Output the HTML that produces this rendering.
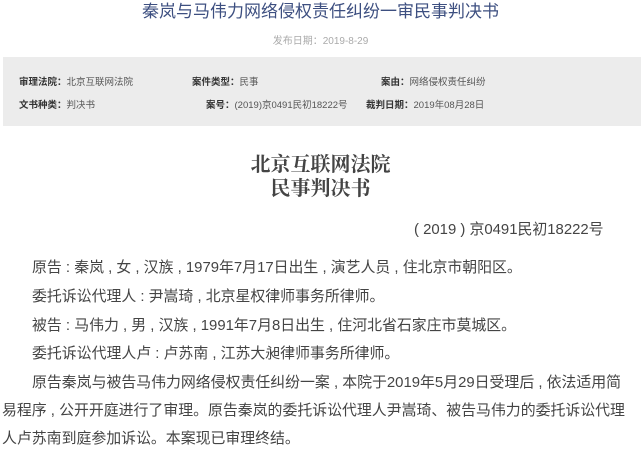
<!DOCTYPE html>
<html><head><meta charset="utf-8"><style>
body{margin:0;width:641px;height:454px;overflow:hidden;background:#fff;font-family:"Liberation Sans","Noto Sans CJK SC",sans-serif;}
.t{position:absolute;left:0;width:641px;text-align:center;}
.title{top:1px;font-size:17px;color:#3d4f80;line-height:22px;}
.date{top:32px;font-size:10px;color:#aaa;}
.box{position:absolute;left:3px;top:57px;width:638px;height:69px;background:#ececec;}
.f{position:absolute;font-size:9.5px;color:#555;white-space:nowrap;}
.f b{color:#333;}
.h{font-family:"Noto Serif CJK SC",serif;font-weight:bold;font-size:20px;color:#444;line-height:24px;}
.p{position:absolute;font-size:14.9px;color:#444;white-space:nowrap;line-height:20px;}
</style></head><body>
<div class="t title">秦岚与马伟力网络侵权责任纠纷一审民事判决书</div>
<div class="t date">发布日期：2019-8-29</div>
<div class="box"></div>
<div class="f" style="left:19px;top:74px"><b>审理法院：</b>北京互联网法院</div>
<div class="f" style="left:192px;top:74px"><b>案件类型：</b>民事</div>
<div class="f" style="left:381px;top:74px"><b>案由：</b>网络侵权责任纠纷</div>
<div class="f" style="left:19px;top:97px"><b>文书种类：</b>判决书</div>
<div class="f" style="left:206px;top:97px"><b>案号：</b>(2019)京0491民初18222号</div>
<div class="f" style="left:366px;top:97px"><b>裁判日期：</b>2019年08月28日</div>
<div class="t h" style="top:151px">北京互联网法院<br>民事判决书</div>
<div class="p" style="left:414px;top:220px">( 2019 ) 京0491民初18222号</div>
<div class="p" style="left:32px;top:258px">原告 : 秦岚 , 女 , 汉族 , 1979年7月17日出生 , 演艺人员 , 住北京市朝阳区。</div>
<div class="p" style="left:32px;top:287px">委托诉讼代理人 : 尹嵩琦 , 北京星权律师事务所律师。</div>
<div class="p" style="left:32px;top:316px">被告 : 马伟力 , 男 , 汉族 , 1991年7月8日出生 , 住河北省石家庄市莫城区。</div>
<div class="p" style="left:32px;top:344px">委托诉讼代理人卢 : 卢苏南 , 江苏大昶律师事务所律师。</div>
<div class="p" style="left:32px;top:373px">原告秦岚与被告马伟力网络侵权责任纠纷一案 , 本院于2019年5月29日受理后 , 依法适用简</div>
<div class="p" style="left:2px;top:401px">易程序 , 公开开庭进行了审理。原告秦岚的委托诉讼代理人尹嵩琦、被告马伟力的委托诉讼代理</div>
<div class="p" style="left:2px;top:429px">人卢苏南到庭参加诉讼。本案现已审理终结。</div>
</body></html>
